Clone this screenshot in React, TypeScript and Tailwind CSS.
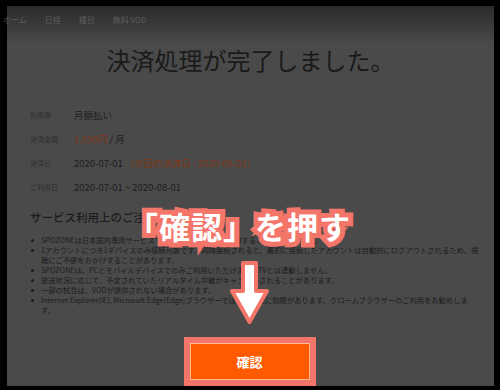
import React from "react";

const F = { fontFamily: '"Noto Sans CJK JP", "Noto Sans", sans-serif' };

const bullets: string[][] = [
  ["SPOZONEは日本国内専用サービスです。日本国外からご利用することはできません。"],
  [
    "1アカウントにつき1デバイスのみ接続可能です。同時接続されると、最初に接続したアカウントは自動的にログアウトされるため、視",
    "聴にご不便をおかけすることがあります。",
  ],
  ["SPOZONEは、PCとモバイルデバイスでのみご利用いただけます。TVとは連動しません。"],
  ["放送状況に応じて、予定されていたリアルタイム中継がキャンセルされることがあります。"],
  ["一部の試合は、VODが提供されない場合があります。"],
  [
    "Internet Explorer(IE), Microsoft Edge(Edge)ブラウザーでは一部機能に制限があります。クロームブラウザーのご利用をお勧めしま",
    "す。",
  ],
];

export default function App() {
  return (
    <div className="relative w-[500px] h-[390px] bg-black overflow-hidden" style={F}>
      <div className="ml-[7px] mt-[6px] w-[487px] h-[380px] flex flex-col bg-[linear-gradient(to_bottom,#2a2a2a_0px,#4a4a4a_38px,#4a4a4a_100%)]">
        {/* nav */}
        <div className="flex gap-[18px] -ml-[4px] pt-[9px] text-[8px] leading-[10px] text-[#5c5c5c] whitespace-nowrap">
          <span>ホーム</span>
          <span>日程</span>
          <span>種目</span>
          <span>無料 VOD</span>
        </div>

        {/* title */}
        <div className="mt-[20px] text-center text-[24px] leading-[30px] text-[#1a1a1a] whitespace-nowrap">
          決済処理が完了しました。
        </div>

        {/* info rows */}
        <div className="mt-[28px] pl-[23px] flex flex-col">
          <div className="flex items-center h-[24px]">
            <span className="w-[44px] text-[7px] text-[#2e2e2e]">利用券</span>
            <span className="text-[9.5px] text-[#1c1c1c]">月額払い</span>
          </div>
          <div className="flex items-center h-[24px]">
            <span className="w-[44px] text-[7px] text-[#2e2e2e]">決済金額</span>
            <span className="text-[9.5px] text-[#1c1c1c]">
              <span className="text-[#7e3818]">1,650円</span> / 月
            </span>
          </div>
          <div className="flex items-center h-[24px]">
            <span className="w-[44px] text-[7px] text-[#2e2e2e]">決済日</span>
            <span className="text-[9.5px] text-[#1c1c1c]">2020-07-01</span>
            <span className="ml-[8px] text-[9.5px] text-[#7e3818]">(次回の決済日 : 2020-08-01)</span>
          </div>
          <div className="flex items-center h-[24px]">
            <span className="w-[44px] text-[7px] text-[#2e2e2e]">ご利用日</span>
            <span className="text-[9.5px] text-[#1c1c1c]">2020-07-01 ~ 2020-08-01</span>
          </div>
        </div>

        {/* notes */}
        <div className="mt-[10px] pl-[23px] text-[11.5px] leading-[16px] font-medium text-[#1c1c1c]">
          サービス利用上のご注意
        </div>
        <div className="mt-[10px] pl-[23px] flex flex-col text-[7.3px] leading-[10px] text-[#1c1c1c]">
          {bullets.map((lines, i) => (
            <div key={i} className="flex items-start">
              <div className="w-[11px] shrink-0">
                <div className="ml-[1px] mt-[4px] w-[3px] h-[3px] rounded-full bg-[#1c1c1c]" />
              </div>
              <div className="flex flex-col">
                {lines.map((l, j) => (
                  <span key={j} className="whitespace-nowrap">
                    {l}
                  </span>
                ))}
              </div>
            </div>
          ))}
        </div>

        {/* button */}
        <div className="mt-auto self-center -translate-x-[1px] p-[6px] bg-[#f4766a]">
          <button className="w-[120px] h-[37px] bg-[#ff5a00] border border-[#ffb896] text-white text-[13px] font-bold flex items-center justify-center">
            確認
          </button>
        </div>
      </div>

      {/* callout */}
      <div className="absolute left-[127px] top-[210px] grid text-[31px] leading-[31px] font-bold tracking-[1px] whitespace-nowrap">
        <span className="[grid-area:1/1] text-[#f4766a] [-webkit-text-stroke:10px_#f4766a]">「確認」を押す</span>
        <span className="[grid-area:1/1] text-white">「確認」を押す</span>
      </div>

      {/* arrow */}
      <svg className="absolute left-[226px] top-[258px]" width="48" height="70" viewBox="0 0 48 70">
        <polygon
          points="17,5 30,5 30,33 41,33 23.5,64 6,33 17,33"
          fill="#ffffff"
          stroke="#f4766a"
          strokeWidth="4"
          strokeLinejoin="round"
        />
      </svg>
    </div>
  );
}
